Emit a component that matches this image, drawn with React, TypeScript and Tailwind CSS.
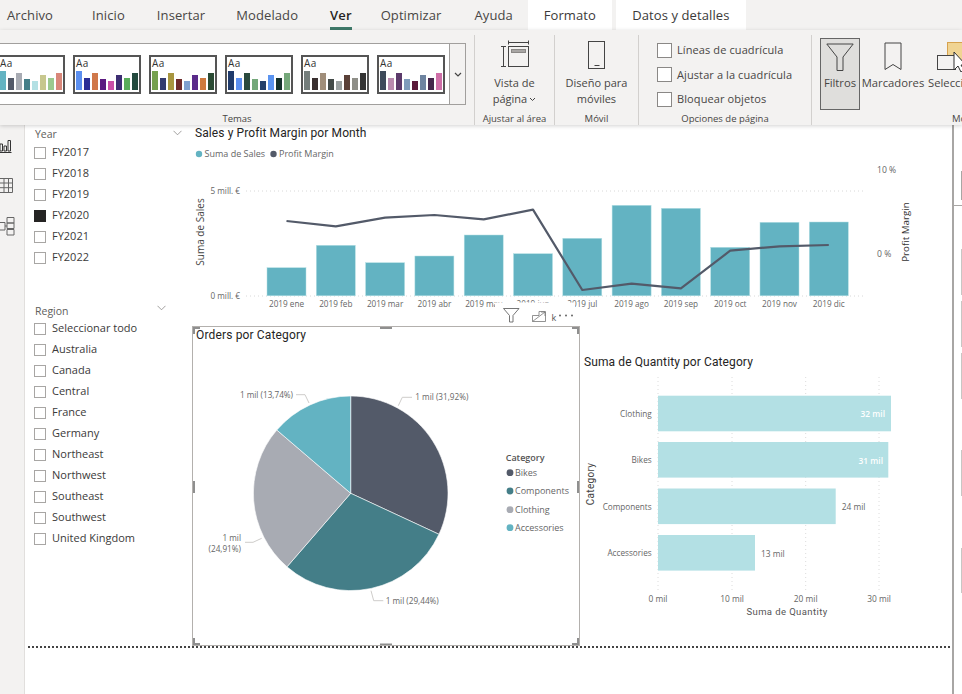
import React from "react";

const uiFont = { fontFamily: '"Open Sans", "Noto Sans", sans-serif' };
const dinFont = '"Roboto", "Noto Sans", sans-serif';
const axisFont = '"Open Sans", "Noto Sans", sans-serif';

const themes = [
  ["#63B3C2", "#535A69", "#A8ABB3", "#447E88", "#B3E0E4", "#C7C78E", "#9BC98F", "#D9877A"],
  ["#5B8FF0", "#2A2D96", "#D0784A", "#5B1A80", "#C94FA8", "#3D2E73", "#59AD5A", "#234A3E"],
  ["#75A04E", "#333A6E", "#A8963F", "#6E2B2B", "#7FA0CF", "#5A2A8A", "#CF7A3E", "#2A4A33"],
  ["#1F3A6B", "#5B8FF0", "#2A4A3E", "#74A87A", "#24406B", "#5B94F0", "#14302A", "#75A87A"],
  ["#747D7B", "#3A3030", "#A08E7A", "#434A48", "#9AA0A0", "#5A4038", "#8F8F88", "#333333"],
  ["#3E4A5A", "#B88AAE", "#5C3A6B", "#7F9CBB", "#5C1A3A", "#6E84A0", "#44264A", "#CF6FA8"],
];
const themeHeights = [19, 12, 17, 11, 9, 15, 12, 17];

function ThemeCard({ colors }: { colors: string[] }) {
  return (
    <div className="w-[68px] h-[39px] border-2 border-[#555555] bg-white pl-[1px] relative shrink-0">
      <div className="text-[10px] leading-[12px] text-[#333333] h-[13px] tracking-[0.5px]">Aa</div>
      <div className="flex items-end gap-[2px] h-[20px]">
        {colors.map((c, i) => (
          <div key={i} className="w-[6px]" style={{ height: themeHeights[i], background: c }} />
        ))}
      </div>
    </div>
  );
}

function Group({ width, label, children, noSep }: { width: number; label: string; children: React.ReactNode; noSep?: boolean }) {
  return (
    <div className={`relative flex flex-col shrink-0 h-full ${noSep ? "" : "border-r border-[#d2d0ce]"}`} style={{ width }}>
      <div className="flex-1 min-h-0">{children}</div>
      <div className="h-[13px] text-center text-[9.5px] leading-[13px] text-[#484644] whitespace-nowrap">{label}</div>
    </div>
  );
}

function RibbonCheck({ label }: { label: string }) {
  return (
    <div className="flex items-center gap-[5px] h-[24.5px]">
      <div className="w-[15px] h-[15px] border border-[#8a8886] bg-white shrink-0" />
      <span className="text-[11px] text-[#484644] tracking-[0.1px] whitespace-nowrap">{label}</span>
    </div>
  );
}

function SlicerRow({ label, checked }: { label: string; checked?: boolean }) {
  return (
    <div className="flex items-center h-[21px]">
      <div className={`w-[12px] h-[12px] border ${checked ? "bg-[#252423] border-[#252423]" : "border-[#a8a6a4] bg-white"} shrink-0`} />
      <span className="ml-[6px] text-[11px] text-[#3b3a39] whitespace-nowrap">{label}</span>
    </div>
  );
}

function Chevron({ className }: { className: string }) {
  return (
    <svg className={className} width="9" height="6" viewBox="0 0 9 6" fill="none">
      <path d="M0.5 0.8 L4.5 4.8 L8.5 0.8" stroke="#8a8886" strokeWidth="0.8" />
    </svg>
  );
}

const months = ["ene", "feb", "mar", "abr", "may", "jun", "jul", "ago", "sep", "oct", "nov", "dic"];
const barTops = [267.7, 245.3, 262.7, 256, 235, 253.7, 238.3, 205.3, 208.3, 247.3, 222.3, 222];
const lineYs = [221, 226.3, 217.7, 215, 219.3, 209.7, 290, 283.7, 288.3, 250.7, 246.3, 245];

function ColumnChart() {
  return (
    <svg className="block w-[760px] h-[201px]" viewBox="192 125 760 201">
      <text x="195" y="137" fontFamily={dinFont} fontSize="12" letterSpacing="0.1" fill="#252423">Sales y Profit Margin por Month</text>
      <circle cx="199" cy="154" r="3.2" fill="#63B3C2" />
      <text x="204.5" y="157" fontFamily={axisFont} fontSize="9" fill="#666666">Suma de Sales</text>
      <circle cx="273.5" cy="154" r="3.2" fill="#535A69" />
      <text x="279" y="157" fontFamily={axisFont} fontSize="9" fill="#666666">Profit Margin</text>

      <line x1="246" x2="866" y1="191" y2="191" stroke="#d8d8d8" strokeDasharray="1 3" />
      <line x1="246" x2="866" y1="296" y2="296" stroke="#d8d8d8" strokeDasharray="1 3" />
      <text x="240" y="194" textAnchor="end" fontFamily={axisFont} fontSize="8.2" fill="#666666">5 mill. €</text>
      <text x="240" y="299" textAnchor="end" fontFamily={axisFont} fontSize="8.2" fill="#666666">0 mill. €</text>
      <text x="877" y="173" fontFamily={axisFont} fontSize="8.6" fill="#666666">10 %</text>
      <text x="877" y="257" fontFamily={axisFont} fontSize="8.6" fill="#666666">0 %</text>
      <text transform="translate(204 232) rotate(-90)" textAnchor="middle" fontFamily={axisFont} fontSize="10" fill="#444444">Suma de Sales</text>
      <text transform="translate(909 232) rotate(-90)" textAnchor="middle" fontFamily={axisFont} fontSize="9.8" fill="#333333">Profit Margin</text>

      {barTops.map((t, i) => (
        <rect key={i} x={267 + 49.3 * i} y={t} width="39" height={295.8 - t} fill="#63B3C2" stroke="#B3E0E4" strokeWidth="0.5" />
      ))}
      <polyline
        fill="none"
        stroke="#535A69"
        strokeWidth="2.2"
        strokeLinejoin="round"
        points={lineYs.map((y, i) => `${286.5 + 49.3 * i},${y}`).join(" ")}
      />
      {months.map((m, i) => (
        <text key={m} x={286.5 + 49.3 * i} y="307" textAnchor="middle" fontFamily={axisFont} fontSize="8.2" fill="#666666">2019 {m}</text>
      ))}
      {/* visual header laid over the axis labels */}
      <rect x="495" y="302.5" width="80" height="23" fill="#ffffff" />
      <path d="M503.5 308.5 H519 L513 315.5 V322 H509.5 V315.5 Z" fill="none" stroke="#666666" strokeWidth="0.9" />
      <path d="M539 311.5 H545.5 V321.5 H532.5 V315.5 H539 Z M532.5 321.5 L545 312 M541 312 H545 V316" fill="none" stroke="#777777" strokeWidth="0.8" />
      <text x="551.5" y="321" fontFamily={axisFont} fontSize="9" fill="#555555">k</text>
      <circle cx="560" cy="315.5" r="1" fill="#666666" />
      <circle cx="566" cy="315.5" r="1" fill="#666666" />
      <circle cx="572" cy="315.5" r="1" fill="#666666" />
    </svg>
  );
}

const slices = [
  { pct: 31.92, color: "#535A69" },
  { pct: 29.44, color: "#447E88" },
  { pct: 24.91, color: "#A8ABB3" },
  { pct: 13.73, color: "#63B3C2" },
];

function piePaths() {
  const cx = 350.7;
  const cy = 493.3;
  const r = 97.3;
  let a = -Math.PI / 2;
  return slices.map((s) => {
    const sweep = (s.pct / 100) * Math.PI * 2;
    const b = a + sweep;
    const d = `M${cx} ${cy} L${cx + r * Math.cos(a)} ${cy + r * Math.sin(a)} A${r} ${r} 0 ${sweep > Math.PI ? 1 : 0} 1 ${cx + r * Math.cos(b)} ${cy + r * Math.sin(b)} Z`;
    a = b;
    return { d, color: s.color };
  });
}

const legend = [
  { label: "Bikes", y: 472.7, color: "#535A69" },
  { label: "Components", y: 491, color: "#447E88" },
  { label: "Clothing", y: 509.7, color: "#A8ABB3" },
  { label: "Accessories", y: 527.7, color: "#63B3C2" },
];

function PieChart() {
  const h = "#8f8f8f";
  return (
    <svg className="block w-[388px] h-[320px]" viewBox="192 326 388 320">
      <text x="196" y="339" fontFamily={dinFont} fontSize="12" letterSpacing="0.15" fill="#252423">Orders por Category</text>
      {piePaths().map((p, i) => (
        <path key={i} d={p.d} fill={p.color} stroke="#ffffff" strokeWidth="0.6" />
      ))}
      <g fill="none" stroke="#c8c6c4" strokeWidth="0.9">
        <polyline points="398.3,405.7 402.3,397.3 412,397.3" />
        <polyline points="296,394.7 305,394.7 309,403" />
        <polyline points="245,542.3 253,542.3 261.7,538.3" />
        <polyline points="371,590.7 373.7,600.7 383.3,600.7" />
      </g>
      <g fontFamily={axisFont} fontSize="8.2" fill="#666666">
        <text x="415.3" y="400">1 mil (31,92%)</text>
        <text x="293" y="398" textAnchor="end">1 mil (13,74%)</text>
        <text x="241" y="541" textAnchor="end">1 mil</text>
        <text x="241" y="552" textAnchor="end">(24,91%)</text>
        <text x="385.7" y="604">1 mil (29,44%)</text>
      </g>
      <text x="505.7" y="461" fontFamily={axisFont} fontSize="9" fontWeight="600" fill="#555555">Category</text>
      {legend.map((l) => (
        <g key={l.label}>
          <circle cx="510" cy={l.y} r="3.4" fill={l.color} />
          <text x="515" y={l.y + 3.2} fontFamily={axisFont} fontSize="9" fill="#666666">{l.label}</text>
        </g>
      ))}
      <g fill="none" stroke={h} strokeWidth="3">
        <path d="M200 327.5 H193.5 V334" />
        <path d="M572 327.5 H578.5 V334" />
        <path d="M200 644.5 H193.5 V638" />
        <path d="M572 644.5 H578.5 V638" />
        <path d="M380 327.5 H392" />
        <path d="M380 645 H392" />
        <path d="M193.5 481 V493" />
        <path d="M578.5 481 V493" />
      </g>
    </svg>
  );
}

const hbars = [
  { label: "Clothing", end: 891, y: 395.7, value: "32 mil", vx: 885, inside: true },
  { label: "Bikes", end: 888.3, y: 442, value: "31 mil", vx: 883, inside: true },
  { label: "Components", end: 835.7, y: 488.5, value: "24 mil", vx: 841.7, inside: false },
  { label: "Accessories", end: 755, y: 535, value: "13 mil", vx: 761, inside: false },
];

function BarChart() {
  return (
    <svg className="block w-[372px] h-[320px]" viewBox="580 326 372 320">
      <text x="584" y="366" fontFamily={dinFont} fontSize="12" letterSpacing="0.1" fill="#252423">Suma de Quantity por Category</text>
      {[658, 732, 805.7, 879].map((x, i) => (
        <g key={x}>
          <line x1={x} x2={x} y1="377" y2="590" stroke="#dcdcdc" strokeDasharray="1 3" />
          <text x={x} y="602" textAnchor="middle" fontFamily={axisFont} fontSize="8.4" fill="#666666">{i * 10} mil</text>
        </g>
      ))}
      {hbars.map((b) => (
        <g key={b.label}>
          <rect x="658" y={b.y} width={b.end - 658} height="35.6" fill="#B3E0E4" />
          <text x="651.7" y={b.y + 21} textAnchor="end" fontFamily={axisFont} fontSize="8.2" fill="#666666">{b.label}</text>
          <text x={b.vx} y={b.y + 21.5} textAnchor={b.inside ? "end" : "start"} fontFamily={axisFont} fontSize="8.4" fontWeight={b.inside ? 600 : 400} fill={b.inside ? "#ffffff" : "#666666"}>{b.value}</text>
        </g>
      ))}
      <text x="787" y="615" textAnchor="middle" fontFamily={dinFont} fontSize="9.5" letterSpacing="0.4" fill="#555555">Suma de Quantity</text>
      <text transform="translate(593.5 484) rotate(-90)" textAnchor="middle" fontFamily={dinFont} fontSize="10" letterSpacing="0.3" fill="#444444">Category</text>
    </svg>
  );
}

export default function App() {
  return (
    <div className="w-[962px] h-[694px] overflow-hidden bg-white flex flex-col text-[#323130]" style={uiFont}>
      {/* tab strip */}
      <div className="h-[30px] bg-[#F3F2F1] flex shrink-0 text-[13px] leading-[30px] tracking-[0.1px] text-[#484644]">
        <div className="pl-[7px] pr-[23px]">Archivo</div>
        <div className="px-4">Inicio</div>
        <div className="pl-4 pr-[15px]">Insertar</div>
        <div className="px-4">Modelado</div>
        <div className="relative pl-4 pr-[13px] font-semibold text-[#252423]">
          Ver
          <div className="absolute left-4 right-[13px] top-[27px] h-[3px] bg-[#3F7A6A]" />
        </div>
        <div className="pl-4 pr-[17px]">Optimizar</div>
        <div className="pl-4 pr-0">Ayuda</div>
        <div className="w-[84px] ml-[15px] bg-white text-center font-medium text-[#3b3a39]">Formato</div>
        <div className="w-[130px] ml-[4px] bg-white text-center font-medium text-[#3b3a39]">Datos y detalles</div>
      </div>

      {/* ribbon */}
      <div className="h-[95px] bg-[#F3F2F1] flex items-stretch shrink-0 shadow-[0_1px_4px_rgba(0,0,0,0.18)] relative z-10 pt-[5px] overflow-hidden">
        <Group width={475} label="Temas">
          <div className="mt-[8px] ml-0 mr-[8px] h-[62px] bg-white border-y border-r border-[#a19f9d] flex items-stretch overflow-hidden">
            <div className="flex-1 flex gap-[8px] pt-[11px] -ml-[3px]">
              {themes.map((c, i) => (
                <ThemeCard key={i} colors={c} />
              ))}
            </div>
            <div className="w-[16px] border-l border-[#a19f9d] bg-[#F3F2F1] flex items-center justify-center shrink-0">
              <svg width="8" height="5" viewBox="0 0 8 5" fill="none"><path d="M1 1 L4 4 L7 1" stroke="#444444" strokeWidth="1.2" /></svg>
            </div>
          </div>
        </Group>
        <Group width={80} label="Ajustar al área">
          <div className="flex flex-col items-center pt-[5px]">
            <svg width="30" height="30" viewBox="0 0 30 30" fill="none" stroke="#444444" strokeWidth="1">
              <path d="M8.5 2.5 H28.5 M8.5 0.5 V4.5 M28.5 0.5 V4.5" />
              <rect x="8.5" y="6.5" width="20" height="20" fill="#F3F2F1" />
              <rect x="11.5" y="9.5" width="14" height="3" fill="#a8a6a4" stroke="#8a8886" />
              <path d="M3.5 6.5 V26.5 M1 6.5 H6 M1 26.5 H6" />
            </svg>
            <div className="text-[11px] leading-[16px] text-center text-[#484644] mt-[5px]">
              Vista de
              <div className="flex items-center justify-center gap-[2px]">
                página
                <svg width="7" height="5" viewBox="0 0 7 5" fill="none"><path d="M1 1 L3.5 3.5 L6 1" stroke="#444444" strokeWidth="1" /></svg>
              </div>
            </div>
          </div>
        </Group>
        <Group width={84} label="Móvil">
          <div className="flex flex-col items-center pt-[5px]">
            <svg width="18" height="30" viewBox="0 0 18 30" fill="none" stroke="#444444" strokeWidth="1">
              <rect x="0.5" y="1.5" width="16" height="27" />
              <path d="M6.5 25.5 H11.5" />
            </svg>
            <div className="text-[11px] leading-[16px] text-center text-[#484644] mt-[5px]">
              Diseño para
              <br />
              móviles
            </div>
          </div>
        </Group>
        <Group width={173} label="Opciones de página">
          <div className="pl-[18px] pt-[3px]">
            <RibbonCheck label="Líneas de cuadrícula" />
            <RibbonCheck label="Ajustar a la cuadrícula" />
            <RibbonCheck label="Bloquear objetos" />
          </div>
        </Group>
        <Group width={160} label="" noSep>
          <div className="flex items-start h-full pl-[8px] pt-[3px]">
            <div className="w-[40px] h-[72px] bg-[#DFDEDC] border border-[#666666] flex flex-col items-center pt-[4px] shrink-0">
              <svg width="28" height="28" viewBox="0 0 28 28" fill="none" stroke="#444444" strokeWidth="1">
                <path d="M0.8 1 H27.2 L17 14 V27.5 H11 V14 Z" />
              </svg>
              <div className="text-[11.25px] leading-[16px] mt-[4px] text-[#484644]">Filtros</div>
            </div>
            <div className="w-[66px] flex flex-col items-center pt-[4px] shrink-0">
              <svg width="18" height="29" viewBox="0 0 18 29" fill="none" stroke="#444444" strokeWidth="1">
                <path d="M1 1 H17 V27.5 L9 22.5 L1 27.5 Z" />
              </svg>
              <div className="text-[11.25px] leading-[16px] mt-[4px] text-[#484644] whitespace-nowrap">Marcadores</div>
            </div>
            <div className="flex flex-col pt-[4px] pl-[2px] shrink-0 w-[60px]">
              <svg className="ml-[9px]" width="30" height="30" viewBox="0 0 30 30">
                <rect x="10.5" y="0.5" width="24" height="18" fill="#F0D493" stroke="#D6A24E" />
                <rect x="0.5" y="13.5" width="18" height="14" fill="#F3F2F1" stroke="#444444" />
                <path d="M17 10 V28 L21 24 L24 30 L27 28 L24 23 H29 Z" fill="#ffffff" stroke="#333333" strokeWidth="1" />
              </svg>
              <div className="text-[11.25px] leading-[16px] mt-[3px] text-[#484644] whitespace-nowrap">Selección</div>
            </div>
          </div>
          <div className="absolute left-[140px] bottom-0 h-[13px] text-[9.5px] leading-[13px] text-[#484644]">Mostrar</div>
        </Group>
      </div>

      {/* body */}
      <div className="flex-1 min-h-0 flex">
        {/* view rail */}
        <div className="w-[25px] shrink-0 bg-[#F3F2F1] border-r border-[#e1dfdd] flex flex-col gap-[24px] pt-[14px] items-start">
          <svg className="-ml-[1px]" width="14" height="14" viewBox="0 0 14 14" fill="none" stroke="#333333" strokeWidth="1">
            <path d="M1 5 H3.5 V12 H1 Z M5 7 H7.5 V12 H5 Z M9 1.5 H11.5 V12 H9 Z M0 13.5 H12.5" />
          </svg>
          <svg width="14" height="16" viewBox="0 0 14 16" fill="none" stroke="#666666" strokeWidth="1">
            <path d="M-1 1.5 H12.5 V15.5 H-1 M-1 6 H12.5 M-1 10.7 H12.5 M4 1.5 V15.5 M8.5 1.5 V15.5" />
          </svg>
          <svg width="15" height="19" viewBox="0 0 15 19" fill="none" stroke="#666666" strokeWidth="1">
            <path d="M7 0.5 H14 V6 H7 Z M7 6 H14 V11.5 H7 Z M7 12.5 H14 V18 H7 Z M0 5.5 H5 V13 H0 M5 9 H7" />
          </svg>
        </div>

        {/* canvas */}
        <div className="w-[927px] shrink-0 flex flex-col">
          <div className="flex h-[521px] shrink-0">
            <div className="w-[167px] shrink-0 pl-[9px] relative">
              <div className="h-[18px] mt-[1px] ml-[1px] text-[10.5px] leading-[17px] text-[#605e5c]">Year</div>
              <Chevron className="absolute left-[148px] top-[5px]" />
              <div className="-mt-[2px]">
                {["FY2017", "FY2018", "FY2019"].map((l) => <SlicerRow key={l} label={l} />)}
                <SlicerRow label="FY2020" checked />
                {["FY2021", "FY2022"].map((l) => <SlicerRow key={l} label={l} />)}
              </div>
              <div className="h-[18px] mt-[35px] ml-[1px] text-[10.5px] leading-[17px] text-[#605e5c]">Region</div>
              <Chevron className="absolute left-[132px] top-[180px]" />
              <div className="-mt-[3px]">
                {["Seleccionar todo", "Australia", "Canada", "Central", "France", "Germany", "Northeast", "Northwest", "Southeast", "Southwest", "United Kingdom"].map((l) => (
                  <SlicerRow key={l} label={l} />
                ))}
              </div>
            </div>
            <div className="flex flex-col">
              <ColumnChart />
              <div className="flex">
                <div className="outline outline-1 -outline-offset-1 outline-[#b3b0ad]"><PieChart /></div>
                <BarChart />
              </div>
            </div>
          </div>
          <div className="h-0 ml-[3px] mr-[2px] border-t-2 border-dotted border-[#444444]" />
        </div>

        {/* collapsed panes */}
        <div className="flex-1 border-l-2 border-[#a8a6a4] flex flex-col relative">
          <div className="h-[81px] border-b border-[#a8a6a4] shrink-0" />
          {[46, 46, 46, 46, 45].map((h, i) => (
            <div key={i} className="ml-[7px] w-[1px] bg-[#c8c6c4] shrink-0" style={{ height: h, marginTop: i === 0 ? 43 : i === 3 ? 51 : i === 4 ? 52 : 6 }} />
          ))}
          <div className="absolute left-[7px] top-[46px] w-[1px] h-[29px] bg-[#a8a6a4]" />
        </div>
      </div>
    </div>
  );
}
